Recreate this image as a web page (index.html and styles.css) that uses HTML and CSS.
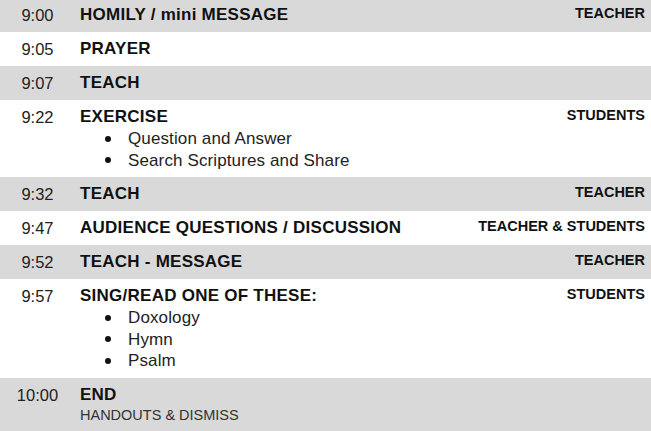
FILE: index.html
```html
<!DOCTYPE html>
<html>
<head>
<meta charset="utf-8">
<link rel="stylesheet" href="styles.css">
</head>
<body>
<div class="schedule">
  <div class="row shade">
    <div class="time">9:00</div>
    <div class="body"><div class="title">HOMILY / mini MESSAGE</div></div>
    <div class="role">TEACHER</div>
  </div>
  <div class="row">
    <div class="time">9:05</div>
    <div class="body"><div class="title">PRAYER</div></div>
    <div class="role"></div>
  </div>
  <div class="row shade">
    <div class="time">9:07</div>
    <div class="body"><div class="title">TEACH</div></div>
    <div class="role"></div>
  </div>
  <div class="row">
    <div class="time">9:22</div>
    <div class="body">
      <div class="title">EXERCISE</div>
      <ul class="items">
        <li>Question and Answer</li>
        <li>Search Scriptures and Share</li>
      </ul>
    </div>
    <div class="role">STUDENTS</div>
  </div>
  <div class="row shade">
    <div class="time">9:32</div>
    <div class="body"><div class="title">TEACH</div></div>
    <div class="role">TEACHER</div>
  </div>
  <div class="row">
    <div class="time">9:47</div>
    <div class="body"><div class="title">AUDIENCE QUESTIONS / DISCUSSION</div></div>
    <div class="role">TEACHER &amp; STUDENTS</div>
  </div>
  <div class="row shade">
    <div class="time">9:52</div>
    <div class="body"><div class="title">TEACH - MESSAGE</div></div>
    <div class="role">TEACHER</div>
  </div>
  <div class="row">
    <div class="time">9:57</div>
    <div class="body">
      <div class="title">SING/READ ONE OF THESE:</div>
      <ul class="items">
        <li>Doxology</li>
        <li>Hymn</li>
        <li>Psalm</li>
      </ul>
    </div>
    <div class="role">STUDENTS</div>
  </div>
  <div class="row shade">
    <div class="time">10:00</div>
    <div class="body">
      <div class="title">END</div>
      <div class="note">HANDOUTS &amp; DISMISS</div>
    </div>
    <div class="role"></div>
  </div>
</div>
</body>
</html>
```
FILE: styles.css
```css
html, body {
  margin: 0;
  padding: 0;
  background: #ffffff;
}
body {
  font-family: "Liberation Sans", Arial, sans-serif;
  color: #111111;
  overflow: hidden;
}
.schedule {
  margin-top: -2px;
  display: flex;
  flex-direction: column;
}
.row {
  display: grid;
  grid-template-columns: 75px 1fr auto;
  column-gap: 5px;
  padding: 7px 6px 7px 0;
}
.shade {
  background: #d9d9d9;
}
.time {
  text-align: center;
  font-size: 16.5px;
  line-height: 20px;
  color: #222222;
}
.title {
  font-size: 17px;
  line-height: 20px;
  font-weight: bold;
  letter-spacing: 0.25px;
}
.role {
  font-size: 14.5px;
  line-height: 16px;
  font-weight: bold;
  text-align: right;
}
.items {
  list-style: none;
  margin: 1px 0 -1px;
  padding: 0;
}
.items li {
  display: flex;
  align-items: center;
  font-size: 17px;
  line-height: 21.5px;
  letter-spacing: 0.12px;
  color: #222222;
}
.items li::before {
  content: "";
  width: 6px;
  height: 6px;
  border-radius: 50%;
  background: #111111;
  margin-left: 25px;
  margin-right: 17px;
  flex: none;
}
.note {
  font-size: 14.5px;
  line-height: 20px;
  color: #333333;
}
```
